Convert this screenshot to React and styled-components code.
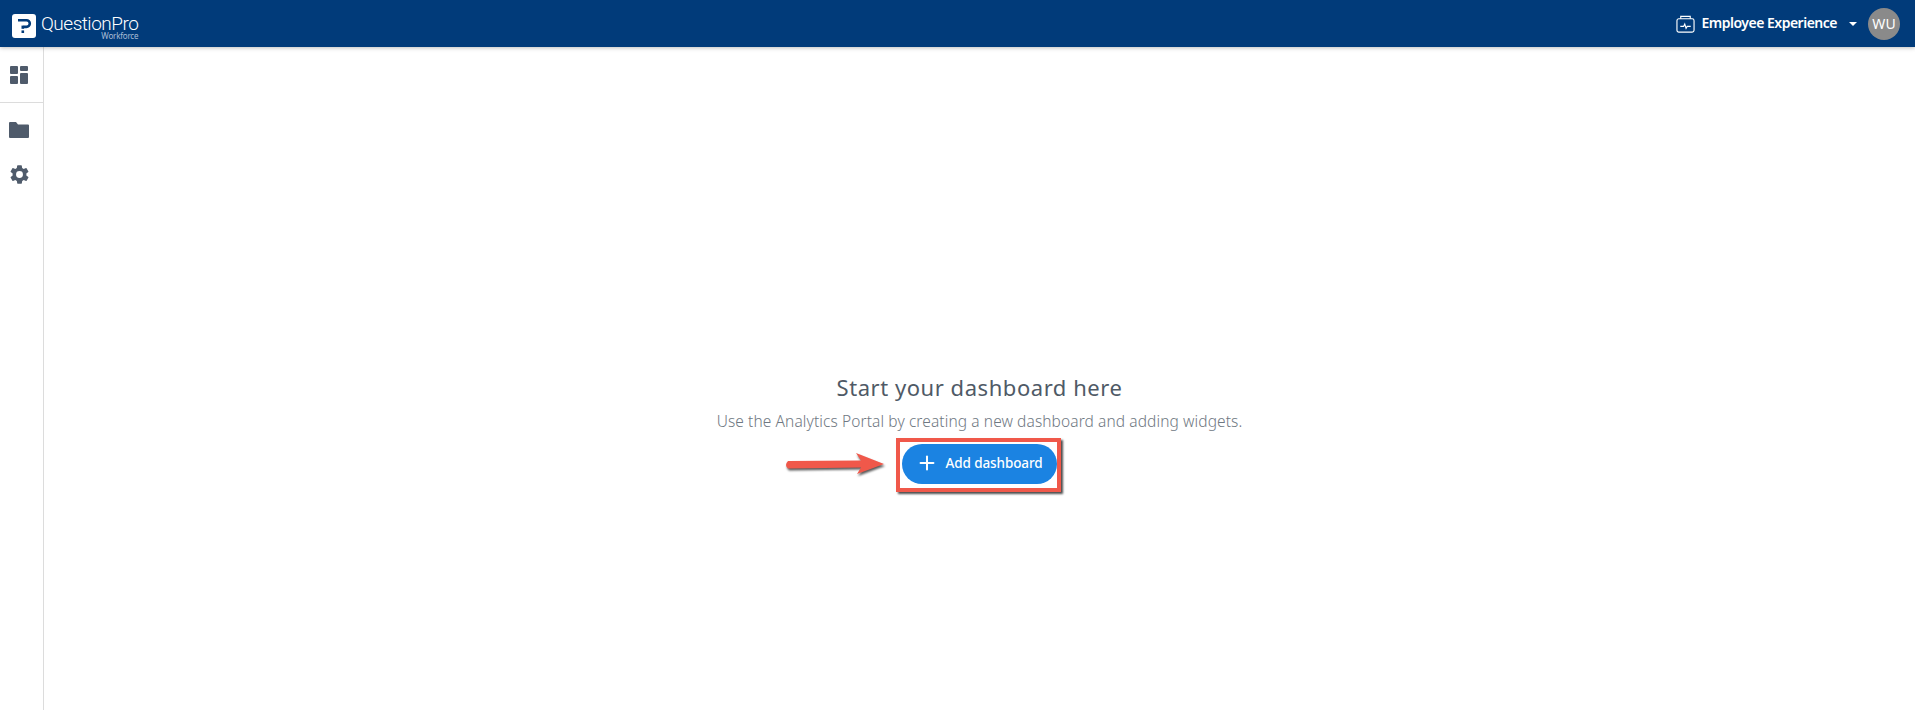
import React from "react";
import styled, { createGlobalStyle } from "styled-components";
import { Plus } from "lucide-react";

const GlobalStyle = createGlobalStyle`
  html, body {
    margin: 0;
    padding: 0;
    background: #fff;
    font-family: "Noto Sans", "Open Sans", sans-serif;
  }
`;

const Page = styled.div`
  height: 710px;
  display: flex;
  flex-direction: column;
  overflow: hidden;
`;

const Header = styled.header`
  height: 47px;
  flex: none;
  background: #013b7a;
  box-shadow: 0 1px 4px rgba(0, 0, 0, 0.25);
  display: flex;
  align-items: center;
  justify-content: space-between;
  padding: 0 15px 0 12px;
  position: relative;
  z-index: 2;
`;

const Brand = styled.div`
  display: flex;
  align-items: flex-start;
  gap: 5px;
  padding-top: 7px;
`;

const LogoBox = styled.div`
  width: 24px;
  height: 24px;
  border-radius: 3px;
  background: #fff;
  display: flex;
  align-items: center;
  justify-content: center;
`;

const BrandText = styled.div`
  display: flex;
  flex-direction: column;
  align-items: flex-end;
  margin-top: 1px;
`;

const BrandName = styled.span`
  color: #fff;
  font-family: "Roboto", sans-serif;
  font-weight: 300;
  font-size: 19px;
  line-height: 17px;
  letter-spacing: -0.5px;
`;

const BrandSub = styled.span`
  color: #a9bdd6;
  font-family: "Noto Sans", sans-serif;
  font-size: 8px;
  line-height: 8px;
  letter-spacing: -0.2px;
`;

const HeaderRight = styled.div`
  display: flex;
  align-items: center;
`;

const ProductName = styled.span`
  color: #fff;
  font-weight: 600;
  font-size: 14px;
  margin: -2px 0 0 6px;
  letter-spacing: -0.5px;
`;

const Caret = styled.span`
  width: 0;
  height: 0;
  border-left: 4px solid transparent;
  border-right: 4px solid transparent;
  border-top: 4px solid #fff;
  margin: 0 11px 0 12px;
`;

const Avatar = styled.div`
  width: 32px;
  height: 32px;
  border-radius: 50%;
  background: #8a8a8a;
  color: #fff;
  font-size: 14px;
  display: flex;
  align-items: center;
  justify-content: center;
`;

const Body = styled.div`
  flex: 1;
  display: flex;
  min-height: 0;
`;

const Sidebar = styled.nav`
  width: 43px;
  flex: none;
  border-right: 1px solid #dcdcdc;
  display: flex;
  flex-direction: column;
`;

const SideTop = styled.div`
  height: 55px;
  border-bottom: 1px solid #dcdcdc;
  display: flex;
  align-items: center;
  justify-content: center;
  padding-right: 5px;
`;

const SideList = styled.div`
  padding-top: 5px;
  display: flex;
  flex-direction: column;
`;

const SideItem = styled.div`
  height: 44px;
  display: flex;
  align-items: center;
  justify-content: center;
  padding-right: 5px;
`;

const Main = styled.main`
  flex: 1;
  display: flex;
  flex-direction: column;
  align-items: center;
  padding-top: 326px;
`;

const Title = styled.h2`
  margin: 0;
  color: #4f5a66;
  font-weight: 400;
  font-size: 22px;
  line-height: 28px;
  letter-spacing: 0.55px;
`;

const Subtitle = styled.p`
  margin: 10px 0 0;
  color: #6f7882;
  font-weight: 300;
  font-size: 15.5px;
  line-height: 20px;
  letter-spacing: 0.1px;
`;

const ButtonWrap = styled.div`
  position: relative;
  margin-top: 13px;
`;

const AddButton = styled.button`
  width: 155px;
  height: 40px;
  border: none;
  border-radius: 20px;
  background: #1b83e2;
  color: #fff;
  font-family: inherit;
  font-weight: 500;
  font-size: 13.5px;
  letter-spacing: -0.1px;
  padding: 0 0 2px;
  display: flex;
  align-items: center;
  justify-content: center;
  gap: 7px;
  cursor: pointer;
`;

const Highlight = styled.div`
  position: absolute;
  left: -6px;
  top: -6px;
  width: 157px;
  height: 46px;
  border: 4px solid #f0584a;
  box-shadow: 2px 2px 2px rgba(0, 0, 0, 0.7);
  pointer-events: none;
`;

const Arrow = styled.svg`
  position: absolute;
  left: -118px;
  top: 3px;
  width: 104px;
  height: 32px;
`;

export default function App() {
  return (
    <Page>
      <GlobalStyle />
      <Header>
        <Brand>
          <LogoBox>
            <svg width="18" height="18" viewBox="0 0 18 18">
              <path d="M3 3.3h8.5a3.3 3.3 0 0 1 0 6.6H8.5" fill="none" stroke="#013b7a" strokeWidth="2.6" />
              <rect x="6.5" y="8.6" width="2.6" height="3.2" fill="#013b7a" />
              <rect x="6.5" y="13.4" width="2.6" height="2.6" fill="#013b7a" />
            </svg>
          </LogoBox>
          <BrandText>
            <BrandName>QuestionPro</BrandName>
            <BrandSub>Workforce</BrandSub>
          </BrandText>
        </Brand>
        <HeaderRight>
          <svg width="19" height="20" viewBox="0 0 20 20" fill="none" stroke="#fff" strokeWidth="1.2">
            <rect x="1" y="4.5" width="18" height="14" rx="2" />
            <path d="M5 4.5V2h10v2.5" />
            <path d="M4.5 12.5h3.5l1.2-2.5 1.4 4.5 1.2-2H15.5" />
          </svg>
          <ProductName>Employee Experience</ProductName>
          <Caret />
          <Avatar>WU</Avatar>
        </HeaderRight>
      </Header>
      <Body>
        <Sidebar>
          <SideTop>
            <svg width="18" height="18" viewBox="0 0 18 18" fill="#4f5b6b">
              <rect x="0" y="0" width="8" height="8" rx="1" />
              <rect x="10" y="0" width="8" height="5" rx="1" />
              <rect x="0" y="10" width="8" height="8" rx="1" />
              <rect x="10" y="7" width="8" height="11" rx="1" />
            </svg>
          </SideTop>
          <SideList>
            <SideItem>
              <svg width="20" height="16" viewBox="0 0 20 16" fill="#4f5b6b">
                <path d="M0 1A1 1 0 0 1 1 0h6l2 2.5h10a1 1 0 0 1 1 1V15a1 1 0 0 1-1 1H1a1 1 0 0 1-1-1z" />
              </svg>
            </SideItem>
            <SideItem>
              <svg width="23" height="23" viewBox="0 0 24 24" fill="#4f5b6b">
                <path d="M19.14 12.94a7.4 7.4 0 0 0 0-1.88l2.03-1.58a.5.5 0 0 0 .12-.64l-1.92-3.32a.5.5 0 0 0-.6-.22l-2.39.96a7 7 0 0 0-1.62-.94l-.36-2.54a.5.5 0 0 0-.5-.42h-3.84a.5.5 0 0 0-.5.42l-.36 2.54a7 7 0 0 0-1.62.94l-2.39-.96a.5.5 0 0 0-.6.22L2.71 8.84a.5.5 0 0 0 .12.64l2.03 1.58a7.4 7.4 0 0 0 0 1.88l-2.03 1.58a.5.5 0 0 0-.12.64l1.92 3.32c.12.22.38.3.6.22l2.39-.96c.5.38 1.04.7 1.62.94l.36 2.54c.05.24.26.42.5.42h3.84c.24 0 .45-.18.5-.42l.36-2.54a7 7 0 0 0 1.62-.94l2.39.96c.22.08.48 0 .6-.22l1.92-3.32a.5.5 0 0 0-.12-.64zM12 15.6a3.6 3.6 0 1 1 0-7.2 3.6 3.6 0 0 1 0 7.2z" />
              </svg>
            </SideItem>
          </SideList>
        </Sidebar>
        <Main>
          <Title>Start your dashboard here</Title>
          <Subtitle>Use the Analytics Portal by creating a new dashboard and adding widgets.</Subtitle>
          <ButtonWrap>
            <AddButton>
              <Plus size={22} strokeWidth={2.2} />
              Add dashboard
            </AddButton>
            <Highlight />
            <Arrow viewBox="0 0 104 32">
              <path
                d="M4 14 L77 13.5 L72 6 L100 17 L73 27 L77 20.5 L4 21.5 Q0 18 4 14 Z"
                fill="#f0584a"
                style={{ filter: "drop-shadow(1px 2px 1px rgba(0,0,0,0.65))" }}
              />
            </Arrow>
          </ButtonWrap>
        </Main>
      </Body>
    </Page>
  );
}
